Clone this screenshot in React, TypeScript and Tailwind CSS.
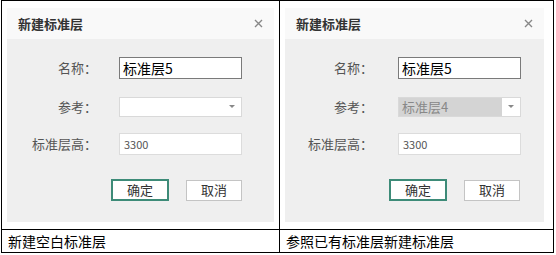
import React from 'react';

const font = { fontFamily: '"Noto Sans CJK SC", "Noto Sans", sans-serif' };

interface DialogProps {
  width: string;
  labelW: string;
  filled?: boolean;
}

const Dialog: React.FC<DialogProps> = ({ width, labelW, filled }) => {
  return (
    <div className={`${width} flex flex-col`}>
      <div className="h-[31px] bg-[#f9f9f9] flex items-center justify-between pl-[11px] pr-[11px]">
        <span className="text-[13px] font-bold text-[#333]">新建标准层</span>
        <svg width="9" height="9" viewBox="0 0 9 9">
          <path d="M1 1 L8 8 M8 1 L1 8" stroke="#888" strokeWidth="1.4" />
        </svg>
      </div>
      <div className="h-[183px] bg-[#efefef] flex flex-col pt-[18px]">
        <div className="flex items-center h-[22px]">
          <span className={`${labelW} text-right text-[13px] text-[#555]`}>名称：</span>
          <div className="ml-auto w-[123px] h-[22px] bg-white border border-[#7a7a7a] flex items-center pl-[3px] text-[14px] text-black" style={{ marginLeft: 0 }}>
            标准层5
          </div>
        </div>
        <div className="flex items-center h-[20px] mt-[18px]">
          <span className={`${labelW} text-right text-[13px] text-[#555]`}>参考：</span>
          <div className="w-[123px] h-[20px] bg-white border border-[#d9d9d9] flex items-center">
            <div className={`flex-1 h-full flex items-center pl-[3px] text-[13px] text-[#888] ${filled ? 'bg-[#d4d4d4]' : ''}`}>
              {filled ? '标准层4' : ''}
            </div>
            <div className="w-[18px] flex items-center justify-center">
              <svg width="6" height="4" viewBox="0 0 6 4">
                <path d="M0 0 L6 0 L3 3 Z" fill="#888" />
              </svg>
            </div>
          </div>
        </div>
        <div className="flex items-center h-[22px] mt-[16px]">
          <span className={`${labelW} text-right text-[13px] text-[#555]`}>标准层高：</span>
          <div className="w-[123px] h-[22px] bg-white border border-[#dcdcdc] flex items-center pl-[4px] text-[11px] text-[#555]">
            3300
          </div>
        </div>
        <div className="flex items-center h-[22px] mt-[24px] pl-[104px]">
          <div className="w-[58px] h-[22px] bg-white border-2 border-[#3d8b78] flex items-center justify-center text-[13px] text-[#333]">
            确定
          </div>
          <div className="ml-[17px] w-[56px] h-[21px] bg-white border border-[#c4c4c4] flex items-center justify-center text-[13px] text-[#333]">
            取消
          </div>
        </div>
      </div>
    </div>
  );
};

export default function App() {
  return (
    <div className="bg-white w-[556px] h-[255px]" style={font}>
      <div className="ml-[1px] w-[553px] h-[253px] border border-black flex flex-col">
        <div className="h-[229px] flex border-b border-black">
          <div className="w-[278px] pl-[5px] pt-[7px] border-r border-black">
            <Dialog width="w-[267px]" labelW="w-[90px] mr-[22px]" />
          </div>
          <div className="flex-1 pl-[5px] pt-[7px]">
            <Dialog width="w-[259px]" labelW="w-[88px] mr-[25px]" filled />
          </div>
        </div>
        <div className="flex-1 flex">
          <div className="w-[278px] pl-[6px] flex items-center text-[14px] text-black border-r border-black">
            新建空白标准层
          </div>
          <div className="flex-1 pl-[6px] flex items-center text-[14px] text-black">
            参照已有标准层新建标准层
          </div>
        </div>
      </div>
    </div>
  );
}
